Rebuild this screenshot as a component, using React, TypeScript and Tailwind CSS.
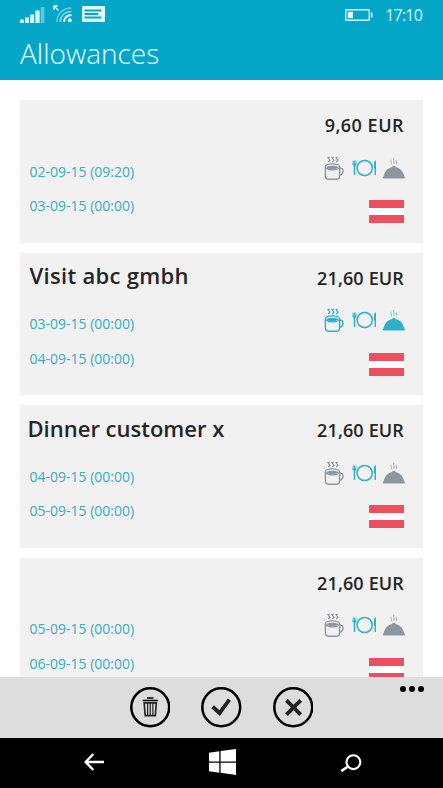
interface Allowance {
  id: number;
  title: string;
  titleClass: string;
  amount: string;
  amountClass: string;
  from: string;
  to: string;
  breakfast: boolean;
  lunch: boolean;
  dinner: boolean;
}

interface MealIconProps {
  active: boolean;
}

const ALLOWANCES: Allowance[] = [
  { id: 1, title: '', titleClass: '', amount: '9,60 EUR', amountClass: 'tracking-[0.5px]', from: '02-09-15 (09:20)', to: '03-09-15 (00:00)', breakfast: false, lunch: true, dinner: false },
  { id: 2, title: 'Visit abc gmbh', titleClass: 'tracking-[0.3px]', amount: '21,60 EUR', amountClass: 'tracking-[0.15px]', from: '03-09-15 (00:00)', to: '04-09-15 (00:00)', breakfast: true, lunch: true, dinner: true },
  { id: 3, title: 'Dinner customer x', titleClass: '-ml-0.5', amount: '21,60 EUR', amountClass: 'tracking-[0.15px]', from: '04-09-15 (00:00)', to: '05-09-15 (00:00)', breakfast: false, lunch: true, dinner: false },
  { id: 4, title: '', titleClass: '', amount: '21,60 EUR', amountClass: 'tracking-[0.15px]', from: '05-09-15 (00:00)', to: '06-09-15 (00:00)', breakfast: false, lunch: true, dinner: false },
];

const iconColor = (active: boolean) => (active ? 'text-[#2db0c9]' : 'text-[#8b969e]');

function CupIcon({ active }: MealIconProps) {
  return (
    <svg width="20" height="25" viewBox="0 0 20 25" fill="none" stroke="currentColor" className={iconColor(active)}>
      <path d="M5.8 1 4 1.8 6 4.2 4.2 6M9.8 1 8 1.8 10 4.2 8.2 6M13.8 1 12 1.8 14 4.2 12.2 6" strokeWidth="1.2" />
      <path d="M1.4 11v8.7c0 2.4 1.4 3.6 3.6 3.6h7c2.2 0 3.6-1.2 3.6-3.6V11" strokeWidth="1.4" />
      <ellipse cx="8.5" cy="10.8" rx="7.1" ry="3" strokeWidth="1.3" />
      <path d="M3.3 11.2c2.2-1.2 8.2-1.2 10.4 0-1.6 1.8-8.8 1.8-10.4 0z" fill="currentColor" strokeWidth="1.2" />
      <path d="M15.6 12.2c2.5-.4 3.5.7 3.4 2.8 0 2.6-1.2 4-3.8 4.1" strokeWidth="1.4" />
    </svg>
  );
}

function PlateIcon({ active }: MealIconProps) {
  return (
    <svg width="25" height="18" viewBox="0 0 25 18" fill="none" stroke="currentColor" className={iconColor(active)}>
      <circle cx="12.7" cy="9" r="7.6" strokeWidth="1.5" />
      <path d="M1.1 1.5v4.2M2.5 1.5v4.2M3.9 1.5v4.2" strokeWidth="0.9" />
      <path d="M.7 4.5h3.6c0 1.7-.8 2.7-1.8 2.8-1-.1-1.8-1.1-1.800-2.800z" fill="currentColor" stroke="none" />
      <path d="M2.5 6.8v9" strokeWidth="1.6" />
      <path d="M22 9.5V4.2c0-1.5.7-2.7 2-3v14.900h-1.400v-6.600z" fill="currentColor" stroke="none" />
    </svg>
  );
}

function ClocheIcon({ active }: MealIconProps) {
  return (
    <svg width="24" height="23" viewBox="0 0 24 23" fill="none" stroke="currentColor" className={iconColor(active)}>
      <path d="M9.200 2.800c-1 1.500 1 2.600 0 4.400M11.800.8c-1 1.800 1 3.700 0 5.800M14.400 2.800c-1 1.500 1 2.600 0 4.400" strokeWidth="0.9" opacity="0.75" />
      <path d="M10.300 9.900c0-1.600 3.200-1.600 3.200 0 4.600.8 7.900 4.600 8.800 10H1.500c.9-5.400 4.200-9.200 8.800-10z" fill="currentColor" stroke="none" />
      <path d="M.3 19.800h23.200l-1.200 1.800H1.500z" fill="currentColor" stroke="none" />
    </svg>
  );
}

function AustrianFlag() {
  return (
    <div className="flex h-[23px] w-[35px] flex-col justify-between bg-white">
      <div className="h-2 bg-[#ee4f5e]" />
      <div className="h-2 bg-[#ee4f5e]" />
    </div>
  );
}

function StatusBar() {
  return (
    <div className="flex h-[30px] items-center justify-between pr-[21px] pl-5">
      <div className="-mt-0.5 flex items-center text-[#e4ffff]">
        <svg width="25" height="17" viewBox="0 0 25 17" fill="currentColor">
          <path d="M0 13.5h3.8V17H0zM5 11.5h3.9V17H5zM10.2 8.5h3.9V17h-3.9zM15.4 4.5h4.2V17h-4.2z" />
          <path d="M20.700 1h3.700v16h-3.700z" opacity="0.4" />
        </svg>
        <svg width="19" height="18" viewBox="0 0 19 18" fill="none" stroke="currentColor" className="ml-2">
          <path d="M.8.8h4.200M.8.8V5M.8.8 5.500 5.500" strokeWidth="1.4" />
          <path d="M4 17C4 9 10 3 18.500 3" strokeWidth="1.5" opacity="0.45" />
          <path d="M7.300 17c0-6 4.500-10.500 11.200-10.500" strokeWidth="1.6" opacity="0.55" />
          <path d="M11 17c0-4 3-7 7.500-7" strokeWidth="2" />
          <circle cx="16.8" cy="15.2" r="2" fill="currentColor" stroke="none" />
        </svg>
        <svg width="23" height="16" viewBox="0 0 23 16" className="ml-2.5">
          <rect width="23" height="16" rx="1" fill="currentColor" />
          <path d="M2.500 4.500h17M2.500 8H16M2.500 11.500h17" stroke="#03a6c7" strokeWidth="1.8" />
        </svg>
      </div>
      <div className="flex items-center gap-3 text-[#d8faff]">
        <svg width="28" height="12" viewBox="0 0 28 12" fill="none" stroke="currentColor">
          <rect x="0.7" y="0.7" width="23.6" height="10.6" rx="0.5" strokeWidth="1.4" />
          <path d="M2.800 2.800h5v6.400h-5z" fill="#fff" stroke="none" />
          <path d="M26.700 3.500v5" strokeWidth="1.6" />
        </svg>
        <span className="text-base leading-none tracking-[-0.8px]">17:10</span>
      </div>
    </div>
  );
}

function AllowanceCard({ item }: { item: Allowance }) {
  return (
    <div className="flex h-[142.6px] shrink-0 justify-between bg-[#f1f1f1] pr-[19px] pl-[9.5px]">
      <div className="flex flex-col">
        <h2 className={`mt-[7.5px] h-[30px] text-[22px] leading-[30px] font-semibold whitespace-nowrap text-[#252525] ${item.titleClass}`}>
          {item.title}
        </h2>
        <p className="mt-6 text-sm leading-5 text-[#35aec4]">{item.from}</p>
        <p className="mt-[14.6px] text-sm leading-5 text-[#35aec4]">{item.to}</p>
      </div>
      <div className="flex flex-col items-end">
        <p className={`mt-[13px] h-6 text-lg leading-6 font-semibold text-[#252525] ${item.amountClass}`}>{item.amount}</p>
        <div className="-mr-0.5 mt-[18.6px] flex h-[25px] items-start">
          <CupIcon active={item.breakfast} />
          <div className="mt-[3px] ml-2">
            <PlateIcon active={item.lunch} />
          </div>
          <div className="mt-px ml-[5px]">
            <ClocheIcon active={item.dinner} />
          </div>
        </div>
        <div className="mt-[19.4px]">
          <AustrianFlag />
        </div>
      </div>
    </div>
  );
}

function AppBar() {
  return (
    <div className="relative flex h-[61px] shrink-0 items-center justify-center gap-[31px] bg-[#ddd] text-black">
      <button aria-label="Delete">
        <svg width="40.5" height="40.5" viewBox="0 0 40 40" fill="none" stroke="currentColor">
          <circle cx="20" cy="20" r="18.7" strokeWidth="2.5" />
          <path d="M12.500 13.300h15M17.500 11.600v-.8h5v.8" strokeWidth="1.4" />
          <path d="M14 15.700h12l-1 12.600H15z" stroke="#222" strokeWidth="1.6" />
          <path d="M17.400 16v12M20 16v12M22.600 16v12" stroke="#222" strokeWidth="1.2" />
        </svg>
      </button>
      <button aria-label="Confirm">
        <svg width="40.5" height="40.5" viewBox="0 0 40 40" fill="none" stroke="currentColor">
          <circle cx="20" cy="20" r="18.7" strokeWidth="2.5" />
          <path d="m11.500 19.500 6.800 6.200 9.700-13.200" stroke="#222" strokeWidth="3.8" />
        </svg>
      </button>
      <button aria-label="Cancel">
        <svg width="40.5" height="40.5" viewBox="0 0 40 40" fill="none" stroke="currentColor">
          <circle cx="20" cy="20" r="18.7" strokeWidth="2.5" />
          <path d="m13.300 13.300 14 14M27.300 13.300l-14 14" stroke="#222" strokeWidth="3.8" />
        </svg>
      </button>
      <button aria-label="More" className="absolute top-[9px] right-[19px] flex gap-[3px]">
        <span className="size-1.5 rounded-full bg-black" />
        <span className="size-1.5 rounded-full bg-black" />
        <span className="size-1.5 rounded-full bg-black" />
      </button>
    </div>
  );
}

function NavBar() {
  return (
    <div className="flex h-[50px] shrink-0 items-center justify-between bg-black pr-[81px] pl-[84px] text-white">
      <svg width="20" height="18" viewBox="0 0 20 18" fill="none" stroke="currentColor" className="-mt-0.5">
        <path d="M20 9H2M9.300 1 1.700 9l7.600 8" strokeWidth="2.4" />
      </svg>
      <svg width="27" height="26" viewBox="0 0 27 26" fill="currentColor" className="-mt-0.5">
        <path d="m0 3.700 10.300-1.500v10.200H0zM11.600 2 27 0v12.400H11.600zM0 13.700h10.300v10L0 22.300zM11.600 13.700H27V26l-15.400-2.200z" />
      </svg>
      <svg width="22" height="18" viewBox="0 0 22 18" fill="none" stroke="currentColor">
        <circle cx="13.4" cy="8.2" r="6.9" strokeWidth="2.1" />
        <path d="m8.300 12.300-7 4.800" strokeWidth="2.6" />
      </svg>
    </div>
  );
}

export default function App() {
  return (
    <div className="flex h-[788px] w-[443px] flex-col overflow-hidden bg-white font-['Open_Sans',sans-serif]">
      {/* Header */}
      <header className="h-20 shrink-0 bg-[#03a6c7]">
        <StatusBar />
        <h1 className="mt-[5px] pl-5 text-[28px] leading-9 font-light text-[#eaffff]">Allowances</h1>
      </header>

      {/* Allowance list */}
      <main className="flex min-h-0 flex-1 flex-col gap-2.5 overflow-hidden px-5 pt-5">
        {ALLOWANCES.map((item) => (
          <AllowanceCard key={item.id} item={item} />
        ))}
      </main>

      <AppBar />
      <NavBar />
    </div>
  );
}
